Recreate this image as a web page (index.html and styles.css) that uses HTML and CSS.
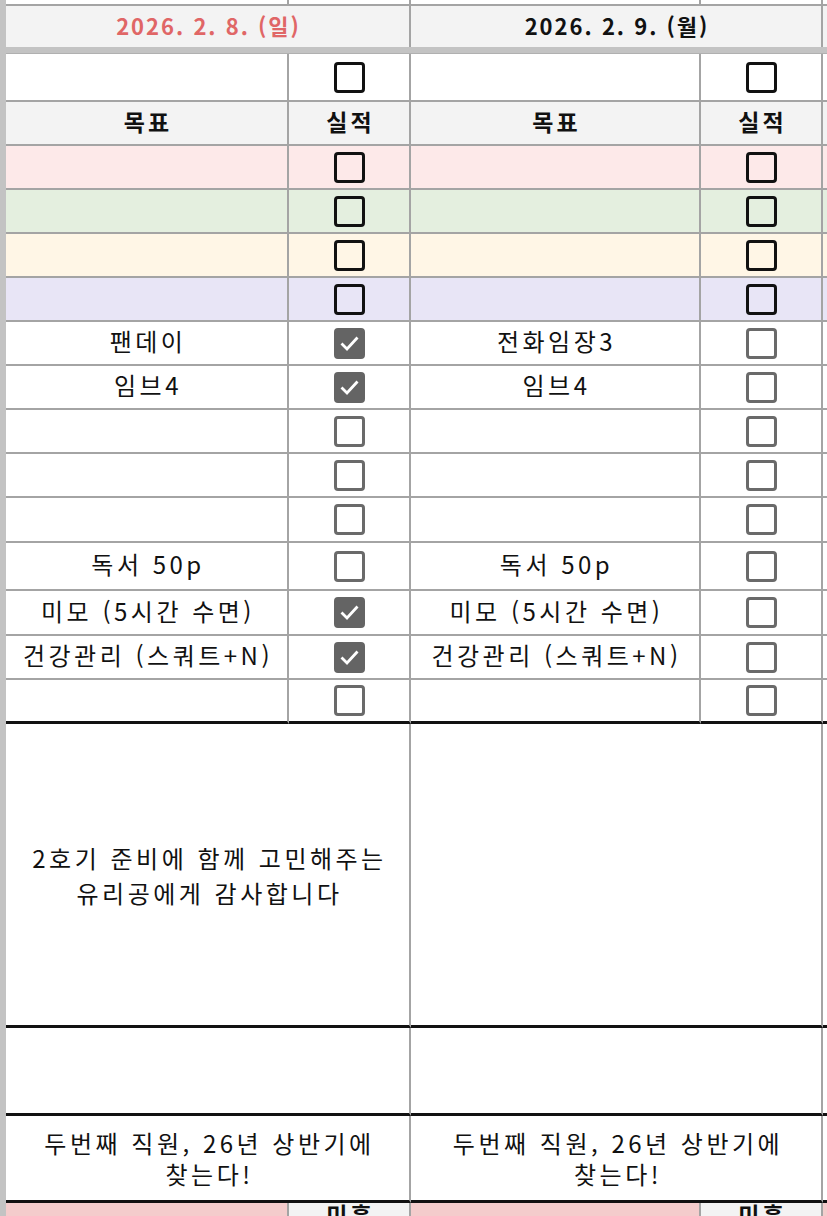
FILE: index.html
```html
<!DOCTYPE html>
<html lang="ko">
<head>
<meta charset="utf-8">
<title>Daily Planner</title>
<link rel="stylesheet" href="styles.css">
</head>
<body>
<div class="sheet">
  <div class="strip"></div>
  <div class="grid">
    <!-- top partial row -->
    <div class="c"></div><div class="c"></div><div class="c"></div><div class="c"></div><div class="c"></div>

    <!-- dates -->
    <div class="c date span2 sun">2026. 2. 8. (일)</div>
    <div class="c date span2">2026. 2. 9. (월)</div>
    <div class="c date"></div>

    <div class="band"></div>

    <!-- master checkbox row -->
    <div class="c"></div><div class="c"><span class="cb dark"></span></div>
    <div class="c"></div><div class="c"><span class="cb dark"></span></div>
    <div class="c"></div>

    <!-- headers -->
    <div class="c head">목표</div><div class="c head">실적</div>
    <div class="c head">목표</div><div class="c head">실적</div>
    <div class="c head"></div>

    <div class="c pink"></div><div class="c pink"><span class="cb dark"></span></div>
    <div class="c pink"></div><div class="c pink"><span class="cb dark"></span></div>
    <div class="c pink"></div>

    <div class="c green"></div><div class="c green"><span class="cb dark"></span></div>
    <div class="c green"></div><div class="c green"><span class="cb dark"></span></div>
    <div class="c green"></div>

    <div class="c yellow"></div><div class="c yellow"><span class="cb dark"></span></div>
    <div class="c yellow"></div><div class="c yellow"><span class="cb dark"></span></div>
    <div class="c yellow"></div>

    <div class="c purple"></div><div class="c purple"><span class="cb dark"></span></div>
    <div class="c purple"></div><div class="c purple"><span class="cb dark"></span></div>
    <div class="c purple"></div>

    <!-- tasks -->
    <div class="c t">팬데이</div>
    <div class="c"><span class="cb on"><svg viewBox="0 0 31 31"><path d="M7.5 15.5l5.5 5.5L23.5 9.5" /></svg></span></div>
    <div class="c t">전화임장3</div><div class="c"><span class="cb"></span></div>
    <div class="c"></div>

    <div class="c t">임브4</div>
    <div class="c"><span class="cb on"><svg viewBox="0 0 31 31"><path d="M7.5 15.5l5.5 5.5L23.5 9.5" /></svg></span></div>
    <div class="c t">임브4</div><div class="c"><span class="cb"></span></div>
    <div class="c"></div>

    <div class="c"></div><div class="c"><span class="cb"></span></div>
    <div class="c"></div><div class="c"><span class="cb"></span></div>
    <div class="c"></div>

    <div class="c"></div><div class="c"><span class="cb"></span></div>
    <div class="c"></div><div class="c"><span class="cb"></span></div>
    <div class="c"></div>

    <div class="c"></div><div class="c"><span class="cb"></span></div>
    <div class="c"></div><div class="c"><span class="cb"></span></div>
    <div class="c"></div>

    <div class="c t">독서 50p</div><div class="c"><span class="cb"></span></div>
    <div class="c t">독서 50p</div><div class="c"><span class="cb"></span></div>
    <div class="c"></div>

    <div class="c t">미모 (5시간 수면)</div>
    <div class="c"><span class="cb on"><svg viewBox="0 0 31 31"><path d="M7.5 15.5l5.5 5.5L23.5 9.5" /></svg></span></div>
    <div class="c t">미모 (5시간 수면)</div><div class="c"><span class="cb"></span></div>
    <div class="c"></div>

    <div class="c t">건강관리 (스쿼트+N)</div>
    <div class="c"><span class="cb on"><svg viewBox="0 0 31 31"><path d="M7.5 15.5l5.5 5.5L23.5 9.5" /></svg></span></div>
    <div class="c t">건강관리 (스쿼트+N)</div><div class="c"><span class="cb"></span></div>
    <div class="c"></div>

    <div class="c bk"></div><div class="c bk"><span class="cb"></span></div>
    <div class="c bk"></div><div class="c bk"><span class="cb"></span></div>
    <div class="c bk"></div>

    <!-- notes -->
    <div class="c bk span2 t note">2호기 준비에 함께 고민해주는 유리공에게 감사합니다</div>
    <div class="c bk span2 note"></div>
    <div class="c bk"></div>

    <div class="c bk span2"></div>
    <div class="c bk span2"></div>
    <div class="c bk"></div>

    <div class="c bk span2 t note short">두번째 직원, 26년 상반기에 찾는다!</div>
    <div class="c bk span2 t note short">두번째 직원, 26년 상반기에 찾는다!</div>
    <div class="c bk"></div>

    <!-- bottom partial row -->
    <div class="c rose"></div><div class="c head low">미흡</div>
    <div class="c rose"></div><div class="c head low">미흡</div>
    <div class="c rose"></div>
  </div>
</div>
</body>
</html>
```

FILE: styles.css
```css
html, body {
  margin: 0;
  padding: 0;
  background: #ffffff;
  overflow: hidden;
}

body {
  width: 827px;
  height: 1216px;
  font-family: "Noto Sans CJK KR", "Noto Sans", sans-serif;
  color: #111;
}

.sheet {
  display: flex;
  align-items: flex-start;
}

.strip {
  flex: none;
  width: 6px;
  height: 1216px;
  background: #c3c3c3;
}

.grid {
  flex: none;
  display: grid;
  grid-template-columns: 283px 122px 290px 122px 283px;
  grid-template-rows: 6px 41px 7px 48px 44px 44px 44px 44px 44px 44px 44px 44px 44px 45px 48px 45px 44px 44px 304px 88px 87px 47px;
}

.c {
  box-sizing: border-box;
  display: flex;
  align-items: center;
  justify-content: center;
  text-align: center;
  border-right: 2px solid #a4a4a4;
  border-bottom: 2px solid #a4a4a4;
  background: #fff;
  min-width: 0;
  overflow: hidden;
  word-break: keep-all;
}

.span2 {
  grid-column: span 2;
}

.band {
  grid-column: 1 / -1;
  background: #c3c3c3;
  border-bottom: 1px solid #b0b0b0;
  box-sizing: border-box;
}

.date {
  background: #f3f3f3;
  border-bottom: none;
  font-weight: 700;
  font-size: 22px;
  letter-spacing: 2px;
  padding-left: 2px;
  padding-bottom: 4px;
  color: #111;
}

.date.sun {
  color: #e06666;
}

.head {
  background: #f3f3f3;
  font-weight: 700;
  font-size: 23px;
  letter-spacing: 3px;
  padding-left: 3px;
  padding-bottom: 5px;
}

.low {
  align-items: flex-start;
  line-height: 22px;
  padding-bottom: 0;
}

.t {
  font-size: 24px;
  letter-spacing: 3.5px;
  padding-left: 3px;
  line-height: 30px;
  padding-bottom: 4px;
}

.note {
  padding: 0 4px 0 8px;
  line-height: 35px;
}

.note.short {
  line-height: 31px;
}

.pink { background: #fde9e9; }
.green { background: #e4efdf; }
.yellow { background: #fff6e6; }
.purple { background: #e8e5f6; }
.rose { background: #f4cccc; }

.bk {
  border-bottom: 3px solid #111;
}

.cb {
  box-sizing: border-box;
  display: block;
  width: 31px;
  height: 31px;
  border: 3px solid #6a6a6a;
  border-radius: 4px;
  background: #fff;
}

.cb.dark {
  border-color: #111;
  background: transparent;
}

.cb.on {
  background: #646464;
  border-color: #646464;
  position: relative;
}

.cb.on svg {
  position: absolute;
  left: -3px;
  top: -3px;
  width: 31px;
  height: 31px;
}

.cb.on path {
  fill: none;
  stroke: #fff;
  stroke-width: 2.8;
}
```
